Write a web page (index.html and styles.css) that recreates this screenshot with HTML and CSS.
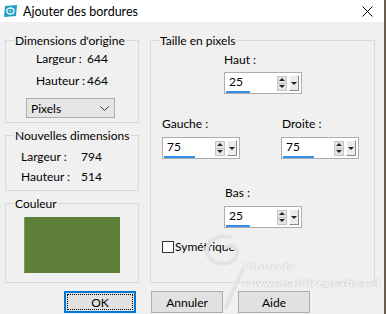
FILE: index.html
```html
<!DOCTYPE html>
<html lang="fr">
<head>
  <meta charset="UTF-8" />
  <title>Ajouter des bordures</title>
  <link rel="stylesheet" href="styles.css">
</head>
<body>

  <div class="dialog">
    <!-- Barre de titre -->
    <header class="titlebar">
      <svg class="app-icon" viewBox="0 0 15 12">
        <path d="M2 1 L14 0 L13 11 L1 12 Z" fill="#1e9cc4"></path>
        <ellipse cx="7.5" cy="6" rx="3.6" ry="3" fill="none" stroke="#e6f6fb" stroke-width="1.4"></ellipse>
        <circle cx="7.5" cy="6" r="1.2" fill="#7fd0ea"></circle>
      </svg>
      <span class="title">Ajouter des bordures</span>
      <svg class="close" viewBox="0 0 11 11">
        <path d="M0.5 0.5 L10.5 10.5 M10.5 0.5 L0.5 10.5" stroke="#000" stroke-width="1"></path>
      </svg>
    </header>

    <main class="content">
      <div class="left-col">
        <fieldset class="group group-origin">
          <legend>Dimensions d'origine</legend>
          <div class="dims dims-origin">
            <span>Largeur :</span><span>644</span>
            <span>Hauteur :</span><span>464</span>
          </div>
          <div class="select">
            <span>Pixels</span>
            <svg class="chevron" viewBox="0 0 9 5">
              <path d="M0.5 0.5 L4.5 4.5 L8.5 0.5" fill="none" stroke="#333" stroke-width="1"></path>
            </svg>
          </div>
        </fieldset>

        <fieldset class="group group-new">
          <legend>Nouvelles dimensions</legend>
          <div class="dims dims-new">
            <span>Largeur :</span><span>794</span>
            <span>Hauteur :</span><span>514</span>
          </div>
        </fieldset>

        <fieldset class="group group-color">
          <legend>Couleur</legend>
          <div class="swatch"></div>
        </fieldset>
      </div>

      <fieldset class="group group-size">
        <legend>Taille en pixels</legend>

        <div class="field field-center">
          <label>Haut :</label>
          <div class="spin">
            <div class="spin-value"><span>25</span><i class="spin-bar" style="width: 24px"></i></div>
            <div class="spin-arrows"><b class="up"></b><b class="down"></b></div>
            <div class="spin-drop"><b class="down"></b></div>
          </div>
        </div>

        <div class="sides">
          <div class="field">
            <label>Gauche :</label>
            <div class="spin">
              <div class="spin-value"><span>75</span><i class="spin-bar" style="width: 31px"></i></div>
              <div class="spin-arrows"><b class="up"></b><b class="down"></b></div>
              <div class="spin-drop"><b class="down"></b></div>
            </div>
          </div>
          <div class="field">
            <label>Droite :</label>
            <div class="spin">
              <div class="spin-value"><span>75</span><i class="spin-bar" style="width: 31px"></i></div>
              <div class="spin-arrows"><b class="up"></b><b class="down"></b></div>
              <div class="spin-drop"><b class="down"></b></div>
            </div>
          </div>
        </div>

        <div class="field field-center field-bottom">
          <label>Bas :</label>
          <div class="spin">
            <div class="spin-value"><span>25</span><i class="spin-bar" style="width: 24px"></i></div>
            <div class="spin-arrows"><b class="up"></b><b class="down"></b></div>
            <div class="spin-drop"><b class="down"></b></div>
          </div>
        </div>

        <label class="check"><span class="box"></span>Symétrique</label>
      </fieldset>
    </main>

    <!-- Boutons -->
    <footer class="buttons">
      <button class="btn btn-default">OK</button>
      <button class="btn">Annuler</button>
      <button class="btn">Aide</button>
    </footer>

    <!-- Filigrane -->
    <svg class="wm-shape" viewBox="0 0 50 80">
      <path d="M30 6 C14 2 4 14 8 24 C12 34 30 36 36 26 C40 18 34 12 26 16 M42 40 L26 76" fill="none" stroke="#e3e3e3" stroke-width="4" stroke-linecap="round"></path>
    </svg>
    <div class="watermark">
      <span class="wm-name">Pinuccia</span>
      <span class="wm-url">www.maldiregrafica.it</span>
    </div>
  </div>

</body>
</html>
```

FILE: styles.css
```css
/* Boîte de dialogue style Windows */
:root {
  --bg: #f0f0f0;
  --line: #d9d9d9;
  --field-border: #abadb3;
  --accent: #0078d7;
  --bar: #3390e6;
}

* {
  box-sizing: border-box;
  margin: 0;
  padding: 0;
}
body {
  background: #6b5b4d;
  font-family: Lato, "Liberation Sans", sans-serif;
  font-size: 12px;
  color: #000;
  width: 386px;
  height: 314px;
  overflow: hidden;
}

.dialog {
  position: relative;
  width: 384px;
  height: 314px;
  background: var(--bg);
}

/* Titre */
.titlebar {
  height: 22px;
  background: #fff;
  display: flex;
  align-items: center;
  padding-left: 3px;
}
.app-icon {
  width: 15px;
  height: 12px;
}
.title {
  margin-left: 5px;
  font-size: 12.5px;
}
.close {
  margin-left: auto;
  margin-right: 11px;
  width: 11px;
  height: 11px;
}

/* Contenu */
.content {
  display: flex;
  gap: 11px;
  padding: 11px 0 0 5px;
}
.left-col {
  display: flex;
  flex-direction: column;
  gap: 5px;
  width: 134px;
}

.group {
  border: 1px solid var(--line);
  min-width: 0;
}
.group legend {
  margin-left: 8px;
  padding: 0 1px;
  line-height: 15px;
}
.group-origin { height: 90px; }
.group-new { height: 63px; }
.group-color { height: 87px; }
.group-size {
  width: 225px;
  height: 250px;
}

.dims {
  display: grid;
}
.dims-origin {
  grid-template-columns: 51px auto;
  padding-left: 30px;
  line-height: 22px;
}
.dims-new {
  grid-template-columns: 60px auto;
  padding-left: 15px;
  margin-top: 4px;
  line-height: 20px;
}

.select {
  display: flex;
  align-items: center;
  justify-content: space-between;
  width: 89px;
  height: 20px;
  margin: 6px 0 0 20px;
  padding: 0 5px 0 4px;
  border: 1px solid #adadad;
  background: #e5e5e5;
}
.chevron {
  width: 9px;
  height: 5px;
}

.swatch {
  width: 96px;
  height: 56px;
  margin: 6px 0 0 18px;
  background: #5d7f37;
  border-left: 1px solid #7d9a5c;
}

/* Taille en pixels */
.field label {
  display: block;
  line-height: 16px;
}
.field-center {
  margin-left: 73px;
}
.field-center:first-of-type {
  margin-top: 4px;
}
.field .spin {
  margin-top: 4px;
}
.sides {
  display: flex;
  gap: 41px;
  margin: 22px 0 0 11px;
}
.sides .spin {
  margin-top: 5px;
}
.field-bottom {
  margin-top: 26px;
}
.field-bottom .spin {
  margin-top: 5px;
}
.field-bottom label,
.sides .field:last-child label {
  padding-left: 1px;
}

.spin {
  display: flex;
  align-items: center;
  width: 78px;
  height: 22px;
  border: 1px solid var(--field-border);
  background: #fff;
  padding: 0 2px 0 1px;
}
.spin-value {
  flex: 1;
  display: flex;
  flex-direction: column;
  align-self: stretch;
  padding-top: 2px;
}
.spin-value span {
  line-height: 14px;
  padding-left: 3px;
}
.spin-bar {
  display: block;
  height: 3px;
  margin-top: 2px;
  background: var(--bar);
}
.spin-arrows {
  display: flex;
  flex-direction: column;
  width: 10px;
  height: 15px;
}
.spin-arrows b,
.spin-drop b {
  display: flex;
  align-items: center;
  justify-content: center;
}
.spin-arrows b {
  flex: 1;
  border: 1px solid #c4c4c4;
  background: #e6e6e6;
}
.spin-arrows b + b {
  border-top: none;
}
.spin-drop {
  display: flex;
  align-items: center;
  justify-content: center;
  width: 10px;
  height: 16px;
  margin-left: 2px;
  background: #ececec;
  border: 1px solid;
  border-color: #fff #8a8a8a #8a8a8a #fff;
}
b.up::before,
b.down::before {
  content: "";
  display: block;
  border-left: 3px solid transparent;
  border-right: 3px solid transparent;
}
b.up::before {
  border-bottom: 3px solid #222;
}
b.down::before {
  border-top: 3px solid #222;
}

.check {
  display: flex;
  align-items: center;
  gap: 1px;
  margin: 11px 0 0 11px;
  line-height: 16px;
}
.check .box {
  width: 12px;
  height: 12px;
  border: 1px solid #333;
  background: #fff;
}

/* Boutons */
.buttons {
  display: flex;
  gap: 15px;
  padding: 8px 0 0 64px;
}
.btn {
  width: 72px;
  height: 22px;
  font-family: inherit;
  font-size: 12px;
  background: #e1e1e1;
  border: 1px solid #adadad;
  color: #000;
}
.btn-default {
  border: 2px solid var(--accent);
  outline: 1px dotted #000;
  outline-offset: -4px;
}

/* Filigrane par-dessus le contenu */
.wm-shape {
  position: absolute;
  left: 200px;
  top: 231px;
  width: 50px;
  height: 80px;
}
.watermark {
  position: absolute;
  left: 243px;
  top: 261px;
  display: flex;
  flex-direction: column;
  font-family: "DejaVu Sans", sans-serif;
  font-weight: bold;
  font-style: italic;
  color: #f4f4f4;
  text-shadow: 0 0 1px #a8a8a8;
  pointer-events: none;
}
.wm-name {
  font-size: 11px;
  line-height: 12px;
}
.wm-url {
  margin-top: 5px;
  font-size: 11px;
  line-height: 12px;
  white-space: nowrap;
}
```
